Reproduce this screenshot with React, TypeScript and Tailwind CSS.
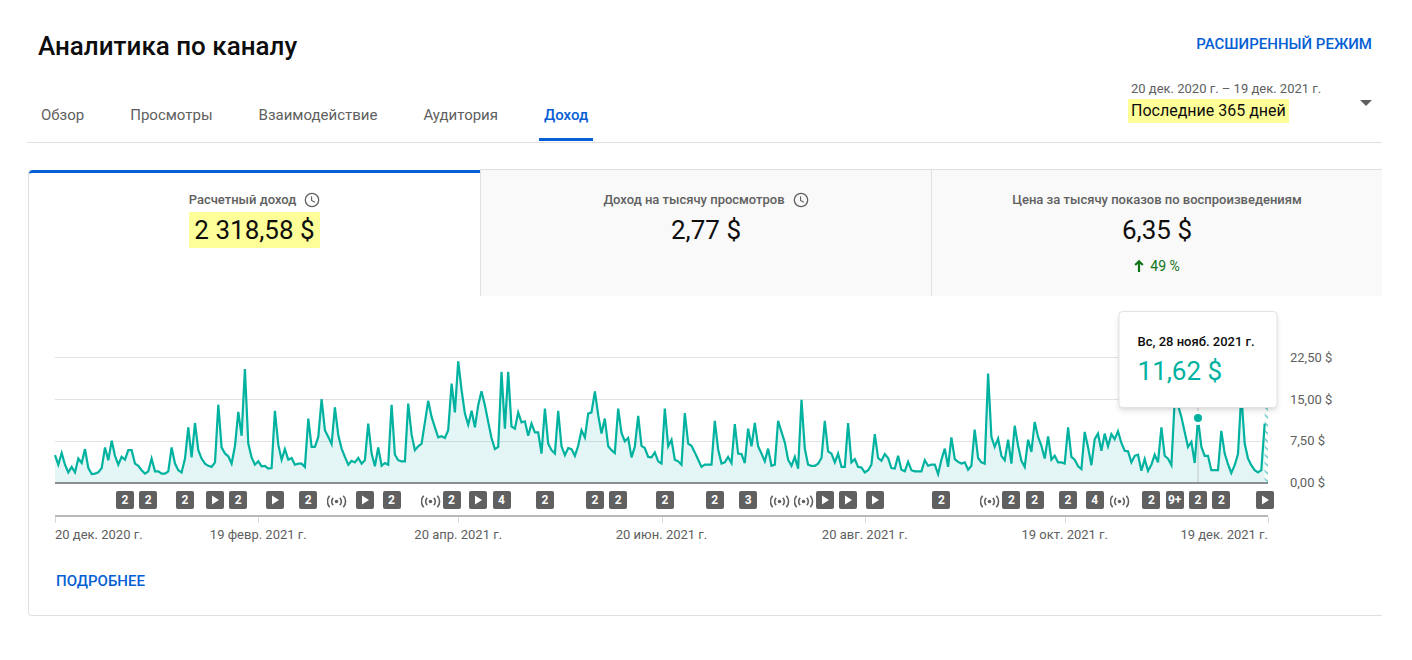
import clsx from "clsx";

// Estimated revenue per day in USD, starting 20 Dec 2020
const revenue = [
  5.0, 3.3, 5.4, 3.3, 1.9, 2.9, 1.9, 4.4, 3.6, 6.1, 2.7, 1.6, 1.7, 1.9, 2.7, 6.4, 4.1, 7.6, 4.9, 3.3,
  4.7, 4.2, 5.9, 5.9, 3.5, 3.1, 2.3, 1.7, 2.1, 4.4, 2.1, 2.1, 1.7, 1.7, 2.1, 6.4, 3.5, 2.3, 1.9, 4.4,
  10.0, 4.6, 10.8, 5.9, 4.4, 3.5, 3.1, 2.9, 3.7, 14.1, 6.4, 5.3, 4.8, 3.5, 6.7, 12.8, 8.5, 20.5, 7.1, 4.6,
  3.3, 3.9, 3.0, 3.1, 2.6, 2.7, 13.0, 6.9, 4.2, 6.1, 4.2, 4.5, 3.3, 3.5, 3.5, 2.9, 11.6, 6.5, 6.5, 8.3,
  15.1, 9.5, 8.3, 7.0, 13.6, 8.6, 6.2, 4.7, 3.3, 4.0, 3.7, 4.5, 3.5, 4.1, 10.7, 5.3, 3.0, 6.4, 3.1, 3.6,
  3.3, 14.1, 5.1, 4.1, 3.9, 3.9, 14.3, 8.7, 5.9, 6.6, 7.1, 10.9, 14.8, 11.9, 10.0, 8.2, 8.4, 8.1, 9.5, 17.9,
  12.7, 21.9, 16.7, 12.5, 10.5, 13.0, 10.0, 14.0, 16.5, 14.0, 11.0, 8.1, 6.1, 6.5, 20.0, 9.8, 20.0, 10.2, 9.8, 12.7,
  10.9, 11.1, 8.5, 10.7, 9.1, 9.1, 5.3, 13.4, 7.1, 5.9, 5.3, 13.0, 6.6, 5.0, 6.3, 6.1, 4.9, 6.7, 9.5, 8.2,
  12.5, 12.7, 16.5, 12.2, 8.9, 11.6, 6.6, 5.9, 5.4, 13.4, 9.0, 7.5, 8.1, 4.6, 6.5, 12.1, 6.7, 6.3, 4.7, 4.6,
  5.5, 3.9, 3.5, 13.4, 6.6, 7.8, 4.2, 3.9, 3.3, 12.6, 7.1, 6.7, 5.5, 4.2, 2.9, 3.3, 3.3, 3.3, 11.2, 6.0,
  3.5, 3.7, 4.7, 3.6, 10.6, 5.3, 5.2, 3.6, 9.8, 6.6, 10.8, 6.6, 5.3, 3.9, 6.2, 3.1, 3.3, 11.2, 9.2, 7.3,
  4.2, 3.1, 4.7, 2.6, 15.0, 6.2, 3.3, 3.1, 3.1, 3.5, 4.5, 11.2, 5.7, 5.3, 3.7, 5.3, 2.9, 2.9, 10.8, 3.7,
  4.3, 2.9, 2.8, 1.9, 2.3, 3.3, 8.8, 4.5, 4.0, 5.2, 4.5, 2.7, 2.6, 4.9, 2.4, 2.1, 3.8, 2.3, 2.1, 2.1,
  2.1, 4.1, 3.1, 3.3, 3.3, 1.6, 4.2, 6.2, 2.9, 8.2, 4.3, 3.8, 3.5, 3.7, 2.4, 3.1, 9.6, 4.5, 3.7, 3.5,
  19.7, 8.3, 6.5, 8.0, 4.9, 4.1, 7.8, 3.5, 10.3, 6.7, 4.0, 2.9, 7.8, 5.6, 11.0, 8.3, 6.7, 4.4, 8.4, 4.2,
  4.9, 3.7, 3.7, 3.5, 10.0, 4.7, 4.2, 3.0, 2.5, 9.2, 6.5, 3.2, 7.9, 8.9, 5.8, 8.9, 6.6, 8.8, 7.9, 9.3,
  7.2, 5.8, 5.7, 3.7, 4.9, 5.1, 2.2, 4.3, 2.2, 3.3, 5.1, 3.7, 10.0, 4.9, 4.4, 3.2, 14.9, 14.0, 11.9, 9.2,
  6.5, 7.4, 3.6, 11.6, 6.5, 4.9, 4.9, 2.3, 2.3, 2.3, 9.4, 5.3, 3.4, 1.8, 3.2, 5.2, 16.0, 7.1, 4.4, 3.2,
  2.3, 1.9, 2.3, 10.7,
];

const LAST_DAY = 364;
const ACTIVE_DAY = 343;
const PLOT_WIDTH = 1213;
const PLOT_HEIGHT = 127;
const BASELINE = 126;
const MAX_VALUE = 22.5;

const tabs = ["Обзор", "Просмотры", "Взаимодействие", "Аудитория", "Доход"];

const metrics = [
  { label: "Расчетный доход", value: "2 318,58 $", pending: true, active: true },
  { label: "Доход на тысячу просмотров", value: "2,77 $", pending: true },
  { label: "Цена за тысячу показов по воспроизведениям", value: "6,35 $", delta: "49 %" },
];

// "play" is a single video, "live" is a stream, anything else is the number of videos
const markers: [number, string][] = [
  [21, "2"], [28, "2"], [39, "2"], [48, "play"], [55, "2"], [66, "play"], [76, "2"], [85, "live"],
  [93, "play"], [101, "2"], [113, "live"], [119, "2"], [127, "play"], [134, "4"], [147, "2"],
  [162, "2"], [169, "2"], [183, "2"], [198, "2"], [208, "3"], [218, "live"], [225, "live"],
  [231, "play"], [238, "play"], [246, "play"], [266, "2"], [281, "live"], [287, "2"], [294, "2"],
  [304, "2"], [312, "4"], [320, "live"], [329, "2"], [336, "9+"], [343, "2"], [350, "2"], [363, "play"],
];

const dates = [
  { day: 0, label: "20 дек. 2020 г." },
  { day: 61, label: "19 февр. 2021 г." },
  { day: 121, label: "20 апр. 2021 г." },
  { day: 182, label: "20 июн. 2021 г." },
  { day: 243, label: "20 авг. 2021 г." },
  { day: 303, label: "19 окт. 2021 г." },
  { day: 364, label: "19 дек. 2021 г." },
];

const scale = ["22,50 $", "15,00 $", "7,50 $", "0,00 $"];

const xOf = (day: number) => (day / LAST_DAY) * PLOT_WIDTH;
const yOf = (value: number) => BASELINE - (value / MAX_VALUE) * (BASELINE - 1);
const percent = (day: number) => `${(day / LAST_DAY) * 100}%`;

function ClockIcon() {
  return (
    <svg viewBox="0 0 16 16" className="size-4" fill="none" stroke="#606060" aria-hidden="true">
      <circle cx="8" cy="8" r="6.7" strokeWidth="1.3" />
      <path d="M7.6 4.2v4.2l3.2 1.9" strokeWidth="1.1" />
    </svg>
  );
}

function UpIcon() {
  return (
    <svg viewBox="0 0 10 14" className="h-3.5 w-2.5" fill="none" stroke="#107516" aria-hidden="true">
      <path d="M5 13V3" strokeWidth="2.2" />
      <path d="M1.2 6 5 2.2 8.8 6" strokeWidth="2.2" />
    </svg>
  );
}

function LiveIcon() {
  return (
    <svg viewBox="0 0 22 18" className="h-[18px] w-[22px]" fill="none" stroke="#606060" strokeWidth="1.6" aria-hidden="true">
      <circle cx="9.5" cy="10.5" r="1.8" fill="#606060" stroke="none" />
      <path d="M6.2 6.9a5 5 0 0 0 0 7.2M12.8 6.9a5 5 0 0 1 0 7.2" />
      <path d="M2.7 4.7a8.6 8.6 0 0 0 0 11.6M16.3 4.7a8.6 8.6 0 0 1 0 11.6" />
    </svg>
  );
}

function Marker({ kind }: { kind: string }) {
  if (kind === "live") return <LiveIcon />;
  return (
    <span className="flex size-[18px] items-center justify-center rounded-xs bg-[#606060] text-xs font-bold text-white">
      {kind === "play" ? (
        <svg viewBox="0 0 18 18" className="size-[18px]" fill="#fff" aria-hidden="true">
          <path d="M6 4.6v8.8L13 9z" />
        </svg>
      ) : (
        kind
      )}
    </span>
  );
}

function RevenuePlot() {
  const points = revenue.map((value, day) => `${xOf(day).toFixed(1)},${yOf(value).toFixed(1)}`);
  const lastX = xOf(revenue.length - 1);
  return (
    <svg
      viewBox={`0 0 ${PLOT_WIDTH} ${PLOT_HEIGHT}`}
      preserveAspectRatio="none"
      className="block h-[127px] w-full overflow-visible"
      aria-hidden="true"
    >
      <defs>
        <pattern id="pending" width="8" height="8" patternUnits="userSpaceOnUse">
          <path d="M-1-1 9 9" stroke="#7fd3cb" strokeWidth="1.8" />
        </pattern>
      </defs>
      {[0, 42, 84].map((y) => (
        <path key={y} d={`M0 ${y + 0.5}H${PLOT_WIDTH}`} stroke="#e2e2e2" vectorEffect="non-scaling-stroke" />
      ))}
      <path d={`M0 ${BASELINE}L${points.join("L")}L${lastX} ${BASELINE}Z`} fill="#00a8a0" fillOpacity="0.11" />
      <rect x={lastX} y="48" width={PLOT_WIDTH - lastX} height={BASELINE - 48} fill="url(#pending)" />
      <path
        d={`M${xOf(ACTIVE_DAY)} 48V${BASELINE}`}
        stroke="#c4c9c9"
        vectorEffect="non-scaling-stroke"
      />
      <path
        d={`M${points.join("L")}`}
        fill="none"
        stroke="#00b29f"
        strokeWidth="2.2"
        vectorEffect="non-scaling-stroke"
      />
      <path d={`M0 ${BASELINE}H${PLOT_WIDTH}`} stroke="#8a9090" strokeWidth="2" vectorEffect="non-scaling-stroke" />
    </svg>
  );
}

function Chart() {
  return (
    <div className="flex gap-[22px] pt-[61px] pl-[26px]">
      <div className="min-w-0 flex-1">
        <div className="relative">
          <RevenuePlot />
          <span
            className="absolute top-[54px] size-[14px] -translate-x-1/2 rounded-full border-3 border-white bg-[#00b29f]"
            style={{ left: percent(ACTIVE_DAY) }}
          />
          <div
            className="absolute bottom-[76px] h-[97px] w-[159px] -translate-x-1/2 rounded-sm border border-[#e3e3e3] bg-white px-[18px] pt-5 whitespace-nowrap shadow-md"
            style={{ left: percent(ACTIVE_DAY) }}
          >
            <p className="text-[13px] leading-5 font-medium text-[#0d0d0d]">Вс, 28 нояб. 2021 г.</p>
            <p className="mt-px text-[26px] leading-9 text-[#00b29f]">11,62 $</p>
          </div>
        </div>
        <ul className="relative h-[33px] border-b-2 border-[#b8b8b8]">
          {markers.map(([day, kind]) => (
            <li key={day} className="absolute top-[7px] -translate-x-1/2" style={{ left: percent(day) }}>
              <Marker kind={kind} />
            </li>
          ))}
        </ul>
        <ul className="relative h-[30px] text-[13px] leading-5 whitespace-nowrap text-[#606060]">
          {dates.map(({ day, label }) => (
            <li key={day}>
              <span className="absolute top-0 h-[6px] w-px bg-[#d9d9d9]" style={{ left: percent(day) }} />
              <span
                className={clsx(
                  "absolute top-2",
                  day > 0 && (day === LAST_DAY ? "-translate-x-full" : "-translate-x-1/2"),
                )}
                style={{ left: percent(day) }}
              >
                {label}
              </span>
            </li>
          ))}
        </ul>
      </div>
      <ul className="-mt-[9px] flex h-[145px] w-[92px] flex-col justify-between text-[13px] leading-5 text-[#606060]">
        {scale.map((label) => (
          <li key={label}>{label}</li>
        ))}
      </ul>
    </div>
  );
}

export default function App() {
  return (
    <div className="min-h-screen bg-white pr-[30px] pb-11 pl-7 font-[Roboto,sans-serif] text-[#0d0d0d]">
      <header className="flex items-start justify-between px-[10px] pt-7">
        <h1 className="text-[26px] leading-9 font-medium">Аналитика по каналу</h1>
        <a href="#advanced" className="pt-[6px] text-[15px] leading-5 font-medium text-[#065fd4] uppercase">
          Расширенный режим
        </a>
      </header>

      <div className="-ml-px flex items-end justify-between border-b border-[#e0e0e0] pt-[15px]">
        <nav role="tablist" aria-label="Разделы аналитики" className="flex gap-9 pl-[9px]">
          {tabs.map((tab) => (
            <button
              key={tab}
              type="button"
              role="tab"
              aria-selected={tab === "Доход"}
              className={clsx(
                "mb-px cursor-pointer rounded-t-xs border-b-3 px-[5px] pb-[11px] text-[15px] leading-6",
                tab === "Доход"
                  ? "border-[#065fd4] font-medium text-[#065fd4]"
                  : "border-transparent text-[#606060]",
              )}
            >
              {tab}
            </button>
          ))}
        </nav>
        <button type="button" className="flex w-[254px] cursor-pointer items-center justify-between pr-[10px] pb-[19px] text-left">
          <span className="flex flex-col items-start">
            <span className="pl-[3px] text-[13px] leading-5 text-[#606060]">20 дек. 2020 г. – 19 дек. 2021 г.</span>
            <span className="bg-[#ffff99] px-[3px] text-base leading-6">Последние 365 дней</span>
          </span>
          <svg viewBox="0 0 12 6" className="mt-1 h-[6px] w-3" fill="#606060" aria-hidden="true">
            <path d="M0 0h12L6 6z" />
          </svg>
        </button>
      </div>

      <section className="mt-[26px] rounded-l-sm border-b border-l border-[#e0e0e0]">
        <div className="grid h-[127px] grid-cols-3">
          {metrics.map(({ label, value, pending, active, delta }) => (
            <button
              key={label}
              type="button"
              className={clsx(
                "flex cursor-pointer flex-col items-center",
                active
                  ? "mt-px rounded-tl-sm border-t-3 border-[#065fd4] pt-[17px]"
                  : "border-t border-l border-[#e0e0e0] bg-[#f9f9f9] pt-5",
              )}
            >
              <span className="flex items-center gap-2 text-[13px] leading-5 font-medium text-[#606060]">
                {label}
                {pending && <ClockIcon />}
              </span>
              <span className={clsx("mt-[2px] px-[5px] text-[26px] leading-9", active && "bg-[#ffff99]")}>
                {value}
              </span>
              {delta && (
                <span className="mt-2 flex items-center gap-[6px] text-sm leading-5 text-[#107516]">
                  <UpIcon />
                  {delta}
                </span>
              )}
            </button>
          ))}
        </div>

        <Chart />

        <a
          href="#details"
          className="mt-6 mb-6 ml-[27px] inline-block text-[15px] leading-5 font-medium text-[#065fd4] uppercase"
        >
          Подробнее
        </a>
      </section>
    </div>
  );
}
